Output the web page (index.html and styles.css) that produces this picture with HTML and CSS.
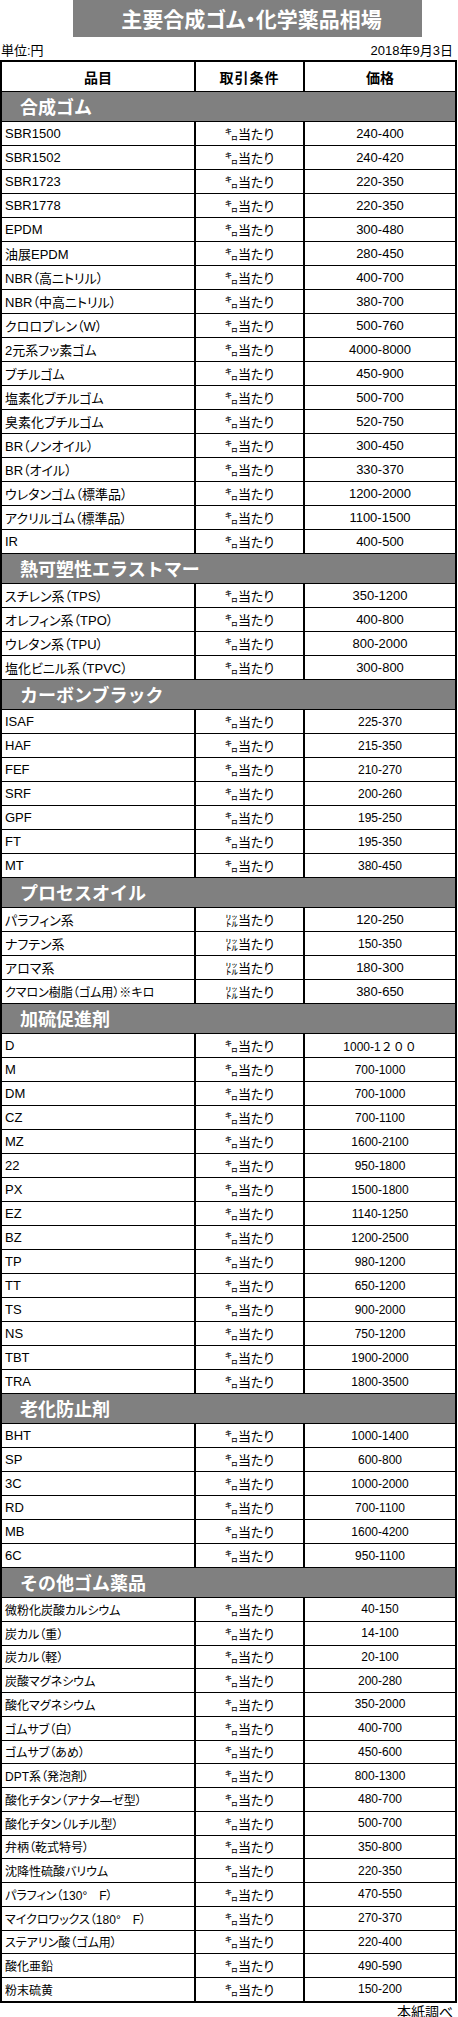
FILE: index.html
```html
<!DOCTYPE html>
<html lang="ja">
<head>
<meta charset="utf-8">
<title>主要合成ゴム・化学薬品相場</title>
<link rel="stylesheet" href="styles.css">
</head>
<body>
<div class="page">
  <h1 class="title">主要合成ゴム・化学薬品相場</h1>
  <div class="meta"><span>単位:円</span><span>2018年9月3日</span></div>
  <div class="sheet">
    <div class="row head"><div class="c1">品目</div><div class="c2">取引条件</div><div class="c3">価格</div></div>

    <div class="sec">合成ゴム</div>
    <div class="row"><div class="c1">SBR1500</div><div class="c2">㌔当たり</div><div class="c3">240-400</div></div>
    <div class="row"><div class="c1">SBR1502</div><div class="c2">㌔当たり</div><div class="c3">240-420</div></div>
    <div class="row"><div class="c1">SBR1723</div><div class="c2">㌔当たり</div><div class="c3">220-350</div></div>
    <div class="row"><div class="c1">SBR1778</div><div class="c2">㌔当たり</div><div class="c3">220-350</div></div>
    <div class="row"><div class="c1">EPDM</div><div class="c2">㌔当たり</div><div class="c3">300-480</div></div>
    <div class="row"><div class="c1">油展EPDM</div><div class="c2">㌔当たり</div><div class="c3">280-450</div></div>
    <div class="row"><div class="c1">NBR（高ニトリル）</div><div class="c2">㌔当たり</div><div class="c3">400-700</div></div>
    <div class="row"><div class="c1">NBR（中高ニトリル）</div><div class="c2">㌔当たり</div><div class="c3">380-700</div></div>
    <div class="row"><div class="c1">クロロプレン（W）</div><div class="c2">㌔当たり</div><div class="c3">500-760</div></div>
    <div class="row"><div class="c1">2元系フッ素ゴム</div><div class="c2">㌔当たり</div><div class="c3">4000-8000</div></div>
    <div class="row"><div class="c1">ブチルゴム</div><div class="c2">㌔当たり</div><div class="c3">450-900</div></div>
    <div class="row"><div class="c1">塩素化ブチルゴム</div><div class="c2">㌔当たり</div><div class="c3">500-700</div></div>
    <div class="row"><div class="c1">臭素化ブチルゴム</div><div class="c2">㌔当たり</div><div class="c3">520-750</div></div>
    <div class="row"><div class="c1">BR（ノンオイル）</div><div class="c2">㌔当たり</div><div class="c3">300-450</div></div>
    <div class="row"><div class="c1">BR（オイル）</div><div class="c2">㌔当たり</div><div class="c3">330-370</div></div>
    <div class="row"><div class="c1">ウレタンゴム（標準品）</div><div class="c2">㌔当たり</div><div class="c3">1200-2000</div></div>
    <div class="row"><div class="c1">アクリルゴム（標準品）</div><div class="c2">㌔当たり</div><div class="c3">1100-1500</div></div>
    <div class="row"><div class="c1">IR</div><div class="c2">㌔当たり</div><div class="c3">400-500</div></div>

    <div class="sec">熱可塑性エラストマー</div>
    <div class="row"><div class="c1">スチレン系（TPS）</div><div class="c2">㌔当たり</div><div class="c3">350-1200</div></div>
    <div class="row"><div class="c1">オレフィン系（TPO）</div><div class="c2">㌔当たり</div><div class="c3">400-800</div></div>
    <div class="row"><div class="c1">ウレタン系（TPU）</div><div class="c2">㌔当たり</div><div class="c3">800-2000</div></div>
    <div class="row"><div class="c1">塩化ビニル系（TPVC）</div><div class="c2">㌔当たり</div><div class="c3">300-800</div></div>

    <div class="sec">カーボンブラック</div>
    <div class="row"><div class="c1">ISAF</div><div class="c2">㌔当たり</div><div class="c3 sm">225-370</div></div>
    <div class="row"><div class="c1">HAF</div><div class="c2">㌔当たり</div><div class="c3 sm">215-350</div></div>
    <div class="row"><div class="c1">FEF</div><div class="c2">㌔当たり</div><div class="c3 sm">210-270</div></div>
    <div class="row"><div class="c1">SRF</div><div class="c2">㌔当たり</div><div class="c3 sm">200-260</div></div>
    <div class="row"><div class="c1">GPF</div><div class="c2">㌔当たり</div><div class="c3 sm">195-250</div></div>
    <div class="row"><div class="c1">FT</div><div class="c2">㌔当たり</div><div class="c3 sm">195-350</div></div>
    <div class="row"><div class="c1">MT</div><div class="c2">㌔当たり</div><div class="c3 sm">380-450</div></div>

    <div class="sec">プロセスオイル</div>
    <div class="row"><div class="c1">パラフィン系</div><div class="c2">㍑当たり</div><div class="c3">120-250</div></div>
    <div class="row"><div class="c1">ナフテン系</div><div class="c2">㍑当たり</div><div class="c3 sm">150-350</div></div>
    <div class="row"><div class="c1">アロマ系</div><div class="c2">㍑当たり</div><div class="c3">180-300</div></div>
    <div class="row"><div class="c1 xs">クマロン樹脂（ゴム用）※キロ</div><div class="c2">㍑当たり</div><div class="c3">380-650</div></div>

    <div class="sec">加硫促進剤</div>
    <div class="row"><div class="c1">D</div><div class="c2">㌔当たり</div><div class="c3 sm">1000-1２００</div></div>
    <div class="row"><div class="c1">M</div><div class="c2">㌔当たり</div><div class="c3 sm">700-1000</div></div>
    <div class="row"><div class="c1">DM</div><div class="c2">㌔当たり</div><div class="c3 sm">700-1000</div></div>
    <div class="row"><div class="c1">CZ</div><div class="c2">㌔当たり</div><div class="c3 sm">700-1100</div></div>
    <div class="row"><div class="c1">MZ</div><div class="c2">㌔当たり</div><div class="c3 sm">1600-2100</div></div>
    <div class="row"><div class="c1">22</div><div class="c2">㌔当たり</div><div class="c3 sm">950-1800</div></div>
    <div class="row"><div class="c1">PX</div><div class="c2">㌔当たり</div><div class="c3 sm">1500-1800</div></div>
    <div class="row"><div class="c1">EZ</div><div class="c2">㌔当たり</div><div class="c3 sm">1140-1250</div></div>
    <div class="row"><div class="c1">BZ</div><div class="c2">㌔当たり</div><div class="c3 sm">1200-2500</div></div>
    <div class="row"><div class="c1">TP</div><div class="c2">㌔当たり</div><div class="c3 sm">980-1200</div></div>
    <div class="row"><div class="c1">TT</div><div class="c2">㌔当たり</div><div class="c3 sm">650-1200</div></div>
    <div class="row"><div class="c1">TS</div><div class="c2">㌔当たり</div><div class="c3 sm">900-2000</div></div>
    <div class="row"><div class="c1">NS</div><div class="c2">㌔当たり</div><div class="c3 sm">750-1200</div></div>
    <div class="row"><div class="c1">TBT</div><div class="c2">㌔当たり</div><div class="c3 sm">1900-2000</div></div>
    <div class="row"><div class="c1">TRA</div><div class="c2">㌔当たり</div><div class="c3 sm">1800-3500</div></div>

    <div class="sec">老化防止剤</div>
    <div class="row"><div class="c1">BHT</div><div class="c2">㌔当たり</div><div class="c3 sm">1000-1400</div></div>
    <div class="row"><div class="c1">SP</div><div class="c2">㌔当たり</div><div class="c3 sm">600-800</div></div>
    <div class="row"><div class="c1">3C</div><div class="c2">㌔当たり</div><div class="c3 sm">1000-2000</div></div>
    <div class="row"><div class="c1">RD</div><div class="c2">㌔当たり</div><div class="c3 sm">700-1100</div></div>
    <div class="row"><div class="c1">MB</div><div class="c2">㌔当たり</div><div class="c3 sm">1600-4200</div></div>
    <div class="row"><div class="c1">6C</div><div class="c2">㌔当たり</div><div class="c3 sm">950-1100</div></div>

    <div class="sec">その他ゴム薬品</div>
    <div class="row tight"><div class="c1 xs">微粉化炭酸カルシウム</div><div class="c2">㌔当たり</div><div class="c3 sm">40-150</div></div>
    <div class="row tight"><div class="c1 xs">炭カル（重）</div><div class="c2">㌔当たり</div><div class="c3 sm">14-100</div></div>
    <div class="row tight"><div class="c1 xs">炭カル（軽）</div><div class="c2">㌔当たり</div><div class="c3 sm">20-100</div></div>
    <div class="row tight"><div class="c1 xs">炭酸マグネシウム</div><div class="c2">㌔当たり</div><div class="c3 sm">200-280</div></div>
    <div class="row tight"><div class="c1 xs">酸化マグネシウム</div><div class="c2">㌔当たり</div><div class="c3 sm">350-2000</div></div>
    <div class="row tight"><div class="c1 xs">ゴムサブ（白）</div><div class="c2">㌔当たり</div><div class="c3 sm">400-700</div></div>
    <div class="row tight"><div class="c1 xs">ゴムサブ（あめ）</div><div class="c2">㌔当たり</div><div class="c3 sm">450-600</div></div>
    <div class="row tight"><div class="c1 xs">DPT系（発泡剤）</div><div class="c2">㌔当たり</div><div class="c3 sm">800-1300</div></div>
    <div class="row tight"><div class="c1 xs">酸化チタン（アナタ―ゼ型）</div><div class="c2">㌔当たり</div><div class="c3 sm">480-700</div></div>
    <div class="row tight"><div class="c1 xs">酸化チタン（ルチル型）</div><div class="c2">㌔当たり</div><div class="c3 sm">500-700</div></div>
    <div class="row tight"><div class="c1 xs">弁柄（乾式特号）</div><div class="c2">㌔当たり</div><div class="c3 sm">350-800</div></div>
    <div class="row tight"><div class="c1 xs">沈降性硫酸バリウム</div><div class="c2">㌔当たり</div><div class="c3 sm">220-350</div></div>
    <div class="row tight"><div class="c1 xs">パラフィン（130°　F）</div><div class="c2">㌔当たり</div><div class="c3 sm">470-550</div></div>
    <div class="row tight"><div class="c1 xs">マイクロワックス（180°　F）</div><div class="c2">㌔当たり</div><div class="c3 sm">270-370</div></div>
    <div class="row tight"><div class="c1 xs">ステアリン酸（ゴム用）</div><div class="c2">㌔当たり</div><div class="c3 sm">220-400</div></div>
    <div class="row tight"><div class="c1 xs">酸化亜鉛</div><div class="c2">㌔当たり</div><div class="c3 sm">490-590</div></div>
    <div class="row tight"><div class="c1 xs">粉末硫黄</div><div class="c2">㌔当たり</div><div class="c3 sm">150-200</div></div>
  </div>
  <div class="source">本紙調べ</div>
</div>
</body>
</html>
```

FILE: styles.css
```css
* { box-sizing: border-box; }

html, body {
  margin: 0;
  padding: 0;
  background: #fff;
}

body {
  font-family: "Liberation Sans", "Noto Sans CJK JP", sans-serif;
  color: #000;
}

.page {
  width: 458px;
}

.title {
  margin: 0 0 0 73px;
  width: 349px;
  height: 37px;
  background: #808080;
  color: #fff;
  font-family: "Noto Sans CJK JP", sans-serif;
  font-size: 21px;
  font-weight: 700;
  line-height: 37px;
  text-align: center;
  padding-left: 8px;
  font-feature-settings: "palt";
}

.meta {
  display: flex;
  justify-content: space-between;
  align-items: flex-end;
  height: 23px;
  padding: 0 5px 2px 1px;
  font-family: "Liberation Sans", "Noto Sans CJK JP", sans-serif;
  font-size: 13px;
  line-height: 15px;
}

.sheet {
  width: 457px;
  border: 2px solid #000;
}

.row {
  display: grid;
  grid-template-columns: 192px 109px 1fr;
  height: 24px;
  border-top: 1px solid #000;
  font-size: 13px;
}

.row.tight {
  height: 23.76px;
}

.row > div {
  display: flex;
  align-items: center;
  white-space: nowrap;
  overflow: hidden;
}

.c1 {
  padding-left: 3px;
  font-feature-settings: "palt";
}

.c2, .c3 {
  justify-content: center;
  border-left: 2px solid #000;
}

.c2 {
  font-family: "Noto Sans CJK JP", sans-serif;
  font-size: 13px;
  font-feature-settings: "palt";
}

.sm { font-size: 12px; }
.xs { font-size: 12px; }

.row.head {
  height: 29px;
  border-top: 0;
  font-family: "Noto Sans CJK JP", sans-serif;
  font-size: 14px;
  font-weight: 700;
}

.row.head .c1 {
  justify-content: center;
  padding-left: 0;
}

.row.head .c2 {
  font-size: 14px;
  letter-spacing: 1px;
}

.sec {
  height: 30px;
  border-top: 1px solid #000;
  background: #808080;
  color: #fff;
  font-family: "Noto Sans CJK JP", sans-serif;
  font-size: 18px;
  font-weight: 700;
  line-height: 28px;
  padding-left: 18px;
}

.source {
  text-align: right;
  padding-right: 5px;
  font-family: "Noto Sans CJK JP", sans-serif;
  font-size: 14px;
  line-height: 16px;
}
```
